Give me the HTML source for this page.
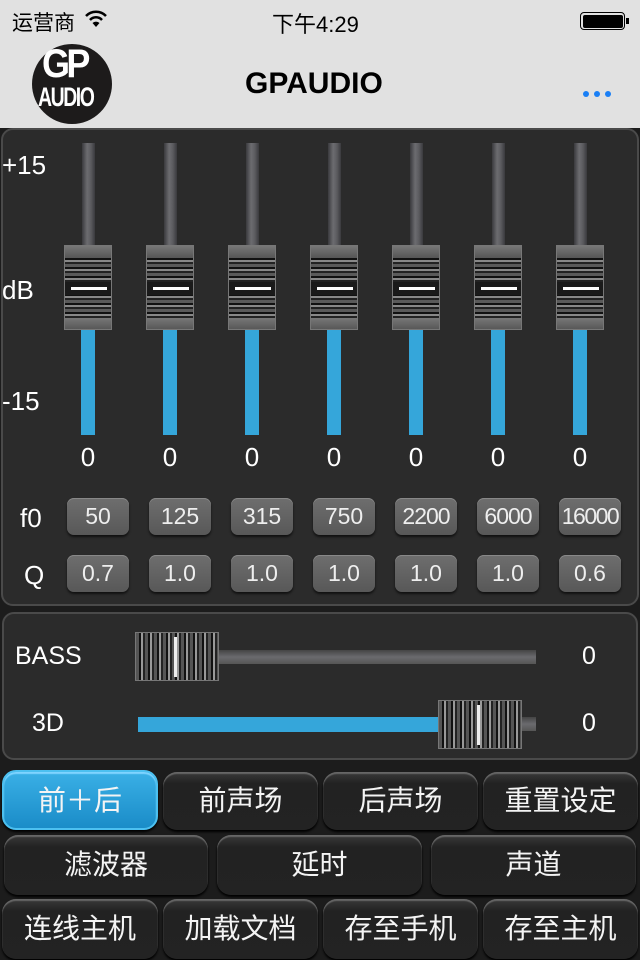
<!DOCTYPE html>
<html><head><meta charset="utf-8"><style>
*{margin:0;padding:0;box-sizing:border-box}
body{width:640px;height:960px;background:#1c1c1c;position:relative;overflow:hidden;font-family:"Liberation Sans","Noto Sans CJK SC",sans-serif;color:#fff}
.a{position:absolute}
.top{left:0;top:0;width:640px;height:128px;background:#e1e1e1}
.panel{background:#2b2b2b;border:2px solid #4a4a4a;border-radius:12px}
.track{width:13px;background:linear-gradient(90deg,#3a3a3d,#6c6c70 40%,#5a5a5e 70%,#3a3a3d)}
.blue{background:#35a6da}
.knob{width:48px;height:85px;border:1px solid #777;background:
linear-gradient(#fff,#fff) 6px 41px/36px 3px no-repeat,
linear-gradient(#1a1a1a,#1a1a1a) 0 36px/100% 13px no-repeat,
linear-gradient(#777,#555) 0 0/100% 12px no-repeat,
linear-gradient(#777,#555) 0 72px/100% 12px no-repeat,
repeating-linear-gradient(#5a5a5a 0 3px,#111 3px 5px,#888 5px 7px,#222 7px 9px)}
.hk{width:84px;height:49px;border:1px solid #777;background:
linear-gradient(#eee,#eee) 38px 4px/3px 40px no-repeat,
repeating-linear-gradient(90deg,#555 0 3px,#111 3px 5px,#999 5px 7px,#222 7px 9px)}
.val{font-size:26px;width:60px;text-align:center}
.pb{width:62px;height:37px;background:linear-gradient(#6e6e6e,#585858);border-radius:7px;box-shadow:0 2px 2px #111,inset 0 1px #888;font-size:23px;text-align:center;line-height:37px;color:#eee}
.btn{background:linear-gradient(#3a3a3a,#222 20%,#232323);border-radius:14px;box-shadow:inset 0 2px 1px #666,0 2px 2px #000;font-size:28px;text-align:center;color:#f4f4f4}
.lab{font-size:26px}
</style></head><body>
<div class="a top"></div>
<div class="a" style="left:12px;top:7px;font-size:21px;color:#000">运营商</div>
<svg class="a" style="left:84px;top:10px" width="24" height="18" viewBox="0 0 24 18"><path d="M2 6a14 14 0 0 1 20 0" stroke="#000" stroke-width="2.5" fill="none"/><path d="M6 10a8 8 0 0 1 12 0" stroke="#000" stroke-width="2.5" fill="none"/><path d="M12 17l-3.5-4a5 5 0 0 1 7 0z" fill="#000"/></svg>
<div class="a" style="left:272px;top:7px;font-size:22px;color:#000">下午4:29</div>
<div class="a" style="left:580px;top:12px;width:45px;height:18px;border:1.5px solid #000;border-radius:4px;padding:1.5px"><div style="background:#000;width:100%;height:100%;border-radius:2px"></div></div>
<div class="a" style="left:626px;top:18px;width:3px;height:6px;background:#000"></div>
<div class="a" style="left:32px;top:44px;width:80px;height:80px;border-radius:50%;background:#1d1b1b"></div>
<div class="a" style="left:42px;top:42px;font-size:40px;font-weight:bold;color:#fff;letter-spacing:-4px;transform:scaleX(.9);transform-origin:left">GP</div>
<div class="a" style="left:38px;top:82px;font-size:27px;font-weight:bold;color:#fff;letter-spacing:-2px;transform:scaleX(.72);transform-origin:left">AUDIO</div>
<div class="a" style="left:245px;top:67px;font-size:30px;font-weight:bold;color:#000">GPAUDIO</div>
<div class="a" style="left:583px;top:91px;width:6px;height:6px;border-radius:50%;background:#1a7ff5;box-shadow:11px 0 #1a7ff5,22px 0 #1a7ff5"></div>

<div class="a panel" style="left:1px;top:128px;width:638px;height:478px"></div>
<div class="a" style="left:2px;top:150px;font-size:26px">+15</div>
<div class="a" style="left:2px;top:275px;font-size:26px">dB</div>
<div class="a" style="left:2px;top:386px;font-size:26px">-15</div>
<div class="a lab" style="left:20px;top:503px">f0</div>
<div class="a lab" style="left:24px;top:560px">Q</div>

<div class="a track" style="left:82px;top:143px;height:102px"></div><div class="a blue" style="left:81px;top:330px;width:14px;height:105px"></div><div class="a knob" style="left:64px;top:245px"></div><div class="a val" style="left:58px;top:442px">0</div>
<div class="a track" style="left:164px;top:143px;height:102px"></div><div class="a blue" style="left:163px;top:330px;width:14px;height:105px"></div><div class="a knob" style="left:146px;top:245px"></div><div class="a val" style="left:140px;top:442px">0</div>
<div class="a track" style="left:246px;top:143px;height:102px"></div><div class="a blue" style="left:245px;top:330px;width:14px;height:105px"></div><div class="a knob" style="left:228px;top:245px"></div><div class="a val" style="left:222px;top:442px">0</div>
<div class="a track" style="left:328px;top:143px;height:102px"></div><div class="a blue" style="left:327px;top:330px;width:14px;height:105px"></div><div class="a knob" style="left:310px;top:245px"></div><div class="a val" style="left:304px;top:442px">0</div>
<div class="a track" style="left:410px;top:143px;height:102px"></div><div class="a blue" style="left:409px;top:330px;width:14px;height:105px"></div><div class="a knob" style="left:392px;top:245px"></div><div class="a val" style="left:386px;top:442px">0</div>
<div class="a track" style="left:492px;top:143px;height:102px"></div><div class="a blue" style="left:491px;top:330px;width:14px;height:105px"></div><div class="a knob" style="left:474px;top:245px"></div><div class="a val" style="left:468px;top:442px">0</div>
<div class="a track" style="left:574px;top:143px;height:102px"></div><div class="a blue" style="left:573px;top:330px;width:14px;height:105px"></div><div class="a knob" style="left:556px;top:245px"></div><div class="a val" style="left:550px;top:442px">0</div>

<div class="a pb" style="left:67px;top:498px">50</div>
<div class="a pb" style="left:149px;top:498px">125</div>
<div class="a pb" style="left:231px;top:498px">315</div>
<div class="a pb" style="left:313px;top:498px">750</div>
<div class="a pb" style="left:395px;top:498px;letter-spacing:-1px">2200</div>
<div class="a pb" style="left:477px;top:498px;letter-spacing:-1px">6000</div>
<div class="a pb" style="left:559px;top:498px;letter-spacing:-1.5px">16000</div>
<div class="a pb" style="left:67px;top:555px">0.7</div>
<div class="a pb" style="left:149px;top:555px">1.0</div>
<div class="a pb" style="left:231px;top:555px">1.0</div>
<div class="a pb" style="left:313px;top:555px">1.0</div>
<div class="a pb" style="left:395px;top:555px">1.0</div>
<div class="a pb" style="left:477px;top:555px">1.0</div>
<div class="a pb" style="left:559px;top:555px">0.6</div>

<div class="a panel" style="left:2px;top:612px;width:636px;height:148px"></div>
<div class="a" style="left:15px;top:642px;font-size:25px">BASS</div>
<div class="a" style="left:32px;top:709px;font-size:25px">3D</div>
<div class="a" style="left:138px;top:650px;width:398px;height:14px;background:linear-gradient(#444,#6a6a6e 50%,#555)"></div>
<div class="a hk" style="left:135px;top:632px"></div>
<div class="a" style="left:138px;top:717px;width:398px;height:14px;background:linear-gradient(#444,#6a6a6e 50%,#555)"></div>
<div class="a blue" style="left:138px;top:717px;width:302px;height:15px"></div>
<div class="a hk" style="left:438px;top:700px"></div>
<div class="a" style="left:582px;top:642px;font-size:25px">0</div>
<div class="a" style="left:582px;top:709px;font-size:25px">0</div>

<div class="a btn" style="left:2px;top:770px;width:156px;height:60px;line-height:58px;background:linear-gradient(#3ab0e6,#1a8cc8);box-shadow:inset 0 2px 1px #7fd4ff,0 2px 2px #000;border:2px solid #4cc0f0">前＋后</div>
<div class="a btn" style="left:163px;top:772px;width:155px;height:58px;line-height:58px">前声场</div>
<div class="a btn" style="left:323px;top:772px;width:155px;height:58px;line-height:58px">后声场</div>
<div class="a btn" style="left:483px;top:772px;width:155px;height:58px;line-height:58px">重置设定</div>
<div class="a btn" style="left:4px;top:835px;width:204px;height:60px;line-height:60px">滤波器</div>
<div class="a btn" style="left:217px;top:835px;width:205px;height:60px;line-height:60px">延时</div>
<div class="a btn" style="left:431px;top:835px;width:205px;height:60px;line-height:60px">声道</div>
<div class="a btn" style="left:2px;top:899px;width:156px;height:60px;line-height:60px">连线主机</div>
<div class="a btn" style="left:163px;top:899px;width:155px;height:60px;line-height:60px">加载文档</div>
<div class="a btn" style="left:323px;top:899px;width:155px;height:60px;line-height:60px">存至手机</div>
<div class="a btn" style="left:483px;top:899px;width:155px;height:60px;line-height:60px">存至主机</div>
</body></html>
